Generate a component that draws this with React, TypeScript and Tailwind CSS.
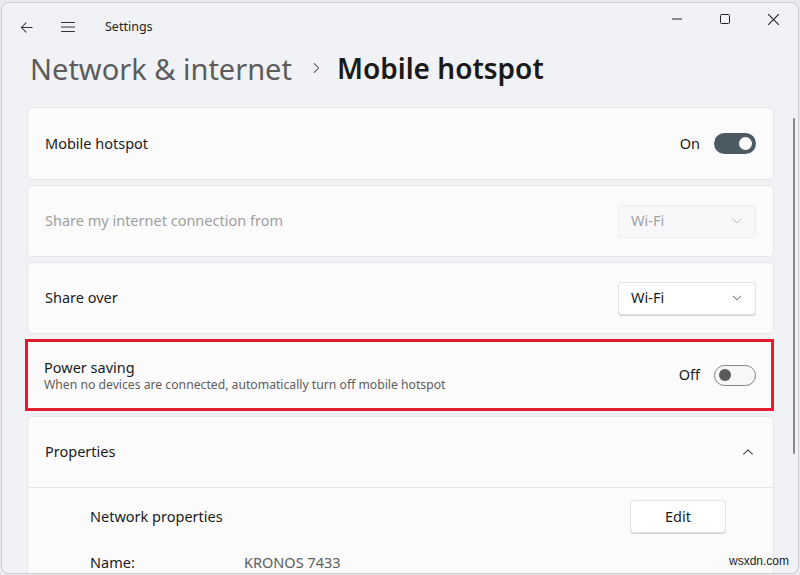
import React from "react";

const font = { fontFamily: '"Noto Sans", "Open Sans", sans-serif' };

function Chevron({ dir = "down", className = "" }: { dir?: "down" | "up" | "right"; className?: string }) {
  const d = dir === "down" ? "M3 5.5l5 5 5-5" : dir === "up" ? "M3 10.5l5-5 5 5" : "M6 3l5 5-5 5";
  return (
    <svg viewBox="0 0 16 16" className={className} fill="none" stroke="currentColor" strokeWidth="1.2" strokeLinecap="round" strokeLinejoin="round">
      <path d={d} />
    </svg>
  );
}

function Toggle({ on }: { on: boolean }) {
  return on ? (
    <div className="flex h-[21px] w-[42px] items-center justify-end rounded-full bg-[#4b5a63] pr-[4px]">
      <div className="h-[13px] w-[13px] rounded-full bg-white" />
    </div>
  ) : (
    <div className="flex h-[21px] w-[42px] items-center rounded-full border border-[#858585] bg-[#f7f7f8] pl-[4px]">
      <div className="h-[12px] w-[12px] rounded-full bg-[#5a5a5a]" />
    </div>
  );
}

function Dropdown({ disabled }: { disabled?: boolean }) {
  return (
    <div
      className={
        "flex h-[33px] w-[138px] items-center justify-between rounded-[4px] border px-3 text-[14.5px] " +
        (disabled ? "border-[#ececee] bg-[#f8f8fa] text-[#a3a3a3]" : "border-[#e3e3e5] bg-white text-[#1b1b1b] shadow-[0_1px_0_#d6d6d8]")
      }
    >
      <span>Wi-Fi</span>
      <Chevron className={"h-[12px] w-[12px] " + (disabled ? "text-[#b0b0b0]" : "text-[#555]")} />
    </div>
  );
}

export default function App() {
  return (
    <div className="h-[575px] w-[800px] overflow-hidden bg-[#e9e9ec]" style={font}>
      <div className="relative mt-[2px] ml-[1px] h-[572px] w-[798px] overflow-hidden rounded-[8px] border border-[#cfcfd2] bg-[#f1f2f6]">
        {/* title bar */}
        <div className="flex h-[48px] items-center text-[#1f1f1f]">
          <svg viewBox="0 0 16 16" className="ml-[17px] h-[15px] w-[15px]" fill="none" stroke="#333" strokeWidth="1.1" strokeLinecap="round" strokeLinejoin="round">
            <path d="M14 8H2.5M7.5 3L2.5 8l5 5" />
          </svg>
          <svg viewBox="0 0 16 16" className="ml-[26px] h-[16px] w-[16px]" fill="none" stroke="#333" strokeWidth="1.1" strokeLinecap="round">
            <path d="M1.5 3.5h13M1.5 8h13M1.5 12.5h13" />
          </svg>
          <span className="ml-[29px] text-[12.5px] text-[#1f1f1f]">Settings</span>
          <div className="ml-auto flex h-full items-start">
            <div className="flex h-[32px] w-[48px] items-center justify-center">
              <svg viewBox="0 0 10 10" className="h-[10px] w-[10px]" stroke="#222" strokeWidth="1">
                <path d="M0 5h10" />
              </svg>
            </div>
            <div className="flex h-[32px] w-[48px] items-center justify-center">
              <svg viewBox="0 0 10 10" className="h-[10px] w-[10px]" fill="none" stroke="#222" strokeWidth="1">
                <rect x="0.5" y="0.5" width="9" height="9" rx="1" />
              </svg>
            </div>
            <div className="mr-[1px] flex h-[32px] w-[48px] items-center justify-center">
              <svg viewBox="0 0 10 10" className="h-[11px] w-[11px]" stroke="#222" strokeWidth="1">
                <path d="M0 0l10 10M10 0L0 10" />
              </svg>
            </div>
          </div>
        </div>

        {/* heading */}
        <div className="-mt-[3px] flex h-[40px] items-center pl-[28px] leading-none">
          <span className="text-[29px] text-[#5c5c5c]">Network &amp; internet</span>
          <Chevron dir="right" className="ml-[17px] mr-[14px] h-[14px] w-[14px] text-[#555]" />
          <span className="text-[28px] font-semibold text-[#1a1a1a]">Mobile hotspot</span>
        </div>

        {/* content */}
        <div className="mt-[19px] flex flex-col gap-[5px] pl-[25px] pr-[24px] text-[14.5px] text-[#1b1b1b]">
          <div className="flex h-[73px] items-center justify-between rounded-[5px] border border-[#e6e6e8] bg-[#fbfbfc] pl-[17px] pr-[17px]">
            <span>Mobile hotspot</span>
            <div className="flex items-center gap-[14px]">
              <span>On</span>
              <Toggle on />
            </div>
          </div>

          <div className="flex h-[72px] items-center justify-between rounded-[5px] border border-[#e6e6e8] bg-[#fbfbfc] pl-[17px] pr-[17px]">
            <span className="text-[#a0a0a0]">Share my internet connection from</span>
            <Dropdown disabled />
          </div>

          <div className="flex h-[72px] items-center justify-between rounded-[5px] border border-[#e6e6e8] bg-[#fbfbfc] pl-[17px] pr-[17px]">
            <span>Share over</span>
            <Dropdown />
          </div>

          <div className="-ml-[2px] flex h-[72px] items-center justify-between border-[3px] border-[#e21c2a] bg-[#fbfbfc] pl-[16px] pr-[15px]">
            <div className="flex flex-col">
              <span className="leading-[20px]">Power saving</span>
              <span className="text-[12.2px] leading-[16px] text-[#5d5d5d]">When no devices are connected, automatically turn off mobile hotspot</span>
            </div>
            <div className="flex items-center gap-[14px]">
              <span>Off</span>
              <Toggle on={false} />
            </div>
          </div>

          <div className="rounded-[5px] border border-[#e6e6e8] bg-[#fbfbfc]">
            <div className="flex h-[71px] items-center justify-between border-b border-[#e6e6e8] pl-[17px] pr-[18px]">
              <span>Properties</span>
              <Chevron dir="up" className="h-[14px] w-[14px] text-[#444]" />
            </div>
            <div className="flex h-[57px] items-center justify-between pl-[62px] pr-[47px]">
              <span>Network properties</span>
              <div className="flex h-[33px] w-[96px] items-center justify-center rounded-[4px] border border-[#e3e3e5] bg-white shadow-[0_1px_0_#d6d6d8]">
                Edit
              </div>
            </div>
            <div className="flex h-[36px] items-center pl-[62px]">
              <span className="w-[154px]">Name:</span>
              <span className="text-[#5d5d5d]">KRONOS 7433</span>
            </div>
          </div>
        </div>

        {/* scrollbar */}
        <div className="absolute right-[3px] top-[115px] h-[336px] w-[2px] rounded-full bg-[#8a8a8a]" />
        <span className="absolute right-[9px] bottom-[3px] text-[12px] text-[#222]" style={{ fontFamily: '"Liberation Sans", sans-serif' }}>
          wsxdn.com
        </span>
      </div>
    </div>
  );
}
